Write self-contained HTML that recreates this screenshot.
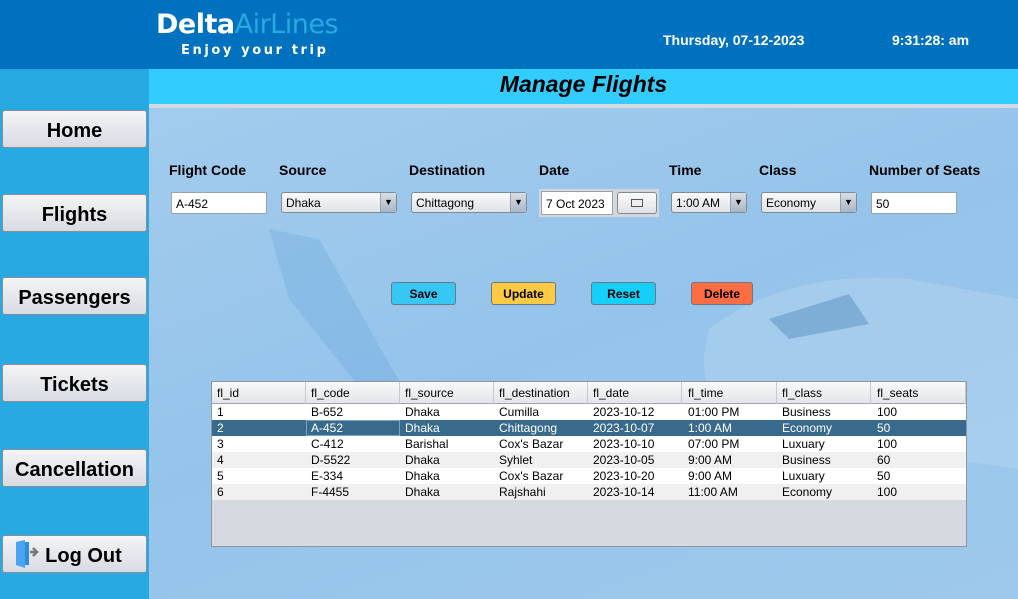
<!DOCTYPE html>
<html><head><meta charset="utf-8"><style>
*{margin:0;padding:0;box-sizing:border-box}
body{width:1018px;height:599px;overflow:hidden;position:relative;font-family:"Liberation Sans",Arial,sans-serif;background:#9cc7ea}
.abs{position:absolute}
#hdr{left:0;top:0;width:1018px;height:69px;background:#0071bf}
#side{left:0;top:69px;width:149px;height:530px;background:#29a9e1}
#main{left:149px;top:69px;width:869px;height:530px;background:linear-gradient(160deg,#a4cdee 0%,#95c3ea 50%,#9ec9ec 100%)}
#tbar{left:149px;top:69px;width:869px;height:35px;background:#33ccff;text-align:center;font:italic bold 23px "Liberation Sans",sans-serif;line-height:31px;color:#000}
#line{left:149px;top:104px;width:869px;height:4px;background:#d3dbe2}
.sb{position:absolute;left:2px;width:145px;height:38px;border:1px solid #8a8f96;border-radius:3px;background:linear-gradient(#f4f4f6,#d8dbe2);font:bold 20px "Liberation Sans",sans-serif;text-align:center;line-height:40px;color:#000}
.lbl{position:absolute;top:162px;font:bold 14px "Liberation Sans",sans-serif;color:#000}
.inp{position:absolute;top:192px;height:22px;background:#fff;border:1px solid #9aa3ad;font-size:12px;padding-left:4px;line-height:22px}
.cb{position:absolute;top:192px;height:21px;border:1px solid #7d8a97;border-radius:3px;background:linear-gradient(#fafafa,#dfe2e6);font-size:12px;padding-left:4px;line-height:20px}
.cb i{position:absolute;right:0;top:0;width:16px;height:19px;border-left:1px solid #9aa3ad;background:linear-gradient(#d8dee6,#aab6c3);font-style:normal;font-size:9px;text-align:center;line-height:19px}
.btn{position:absolute;top:282px;width:65px;height:23px;border:1px solid #6b7885;border-radius:3px;font:bold 12px "Liberation Sans",sans-serif;text-align:center;line-height:22px}
#tbl{left:211px;top:381px;width:756px;height:166px;background:#d6d9df;border:1px solid #8f969e}
.row{position:absolute;left:0;width:754px;height:16px;font-size:12px;line-height:17px}
.row span{position:absolute;top:0}
.th{top:0;height:22px;background:linear-gradient(#fafafa,#e3e5e9);border-bottom:1px solid #a0a6ae;line-height:22px}
.th span{height:22px;border-right:1px solid #c6cad0;width:94px}
</style></head><body>
<div id="hdr" class="abs">
<div class="abs" style="left:156px;top:9px;font:bold 27px 'DejaVu Sans',sans-serif;color:#fff;letter-spacing:-0.5px">Delta<span style="font-weight:normal;color:#29a9e1">AirLines</span></div>
<div class="abs" style="left:181px;top:43px;font:bold 13px 'DejaVu Sans',sans-serif;color:#fff;letter-spacing:2.6px">Enjoy your trip</div>
<div class="abs" style="left:663px;top:32px;font:bold 14px 'Liberation Sans',sans-serif;color:#fff">Thursday, 07-12-2023</div>
<div class="abs" style="left:892px;top:32px;font:bold 14px 'Liberation Sans',sans-serif;color:#fff">9:31:28: am</div>
</div>
<div id="side" class="abs"></div>
<div id="main" class="abs">
<svg width="869" height="530" style="position:absolute;left:0;top:0;opacity:.25"><path d="M120 160 L170 170 L260 330 L220 330 L140 230Z" fill="#5aa0d8"/><path d="M560 260 Q640 200 760 210 L869 230 L869 400 L600 360 Q540 330 560 260Z" fill="#cfe4f5"/><path d="M620 250 L700 225 L720 255 L640 270Z" fill="#3a6e9a"/></svg>
</div>
<div id="tbar" class="abs">Manage Flights</div>
<div id="line" class="abs"></div>
<div class="sb" style="top:110px">Home</div>
<div class="sb" style="top:194px">Flights</div>
<div class="sb" style="top:277px">Passengers</div>
<div class="sb" style="top:364px">Tickets</div>
<div class="sb" style="top:449px">Cancellation</div>
<div class="sb" style="top:535px;padding-left:18px">Log Out
<svg width="26" height="30" style="position:absolute;left:10px;top:3px"><path d="M3 3 L12 1 L12 29 L3 26Z" fill="#4aa3f0"/><path d="M12 3 L16 3 L16 26 L12 26" fill="#2f8ce0"/><path d="M17 13 L23 13 M20 9 L24 13 L20 17" stroke="#777" stroke-width="2.5" fill="none"/></svg></div>

<div class="lbl" style="left:169px">Flight Code</div>
<div class="lbl" style="left:279px">Source</div>
<div class="lbl" style="left:409px">Destination</div>
<div class="lbl" style="left:539px">Date</div>
<div class="lbl" style="left:669px">Time</div>
<div class="lbl" style="left:759px">Class</div>
<div class="lbl" style="left:869px">Number of Seats</div>

<div class="inp" style="left:171px;width:96px">A-452</div>
<div class="cb" style="left:281px;width:116px">Dhaka<i>▼</i></div>
<div class="cb" style="left:411px;width:116px">Chittagong<i>▼</i></div>
<div class="abs" style="left:539px;top:189px;width:120px;height:28px;background:#d3d7dc"></div>
<div class="inp" style="left:541px;top:191px;width:72px;height:24px;line-height:24px">7 Oct 2023</div>
<div class="cb" style="left:617px;top:192px;width:40px;height:22px;text-align:center;padding:0"><span style="display:inline-block;width:12px;height:8px;border:1px solid #555;margin-top:6px;background:#eee"></span></div>
<div class="cb" style="left:671px;width:76px">1:00 AM<i>▼</i></div>
<div class="cb" style="left:761px;width:96px">Economy<i>▼</i></div>
<div class="inp" style="left:871px;width:86px">50</div>

<div class="btn" style="left:391px;background:#36c7f5">Save</div>
<div class="btn" style="left:491px;background:#fdcb43">Update</div>
<div class="btn" style="left:591px;background:#16cff8">Reset</div>
<div class="btn" style="left:691px;width:62px;background:#fc6d43">Delete</div>

<div id="tbl" class="abs">
<div class="row th"><span style="left:0;padding-left:5px">fl_id</span><span style="left:94px;padding-left:5px">fl_code</span><span style="left:188px;padding-left:5px">fl_source</span><span style="left:282px;padding-left:5px">fl_destination</span><span style="left:376px;padding-left:5px">fl_date</span><span style="left:471px;padding-left:5px">fl_time</span><span style="left:565px;padding-left:5px">fl_class</span><span style="left:660px;padding-left:5px">fl_seats</span></div>
<div class="row" style="top:22px;background:#fff"><span style="left:5px">1</span><span style="left:99px">B-652</span><span style="left:193px">Dhaka</span><span style="left:287px">Cumilla</span><span style="left:381px">2023-10-12</span><span style="left:476px">01:00 PM</span><span style="left:570px">Business</span><span style="left:665px">100</span></div>
<div class="row" style="top:38px;background:#386a8c;color:#fff"><span style="left:5px">2</span><span style="left:94px;width:94px;height:16px;border:1px solid #7aa6c8;padding-left:4px;line-height:15px">A-452</span><span style="left:193px">Dhaka</span><span style="left:287px">Chittagong</span><span style="left:381px">2023-10-07</span><span style="left:476px">1:00 AM</span><span style="left:570px">Economy</span><span style="left:665px">50</span></div>
<div class="row" style="top:54px;background:#fff"><span style="left:5px">3</span><span style="left:99px">C-412</span><span style="left:193px">Barishal</span><span style="left:287px">Cox's Bazar</span><span style="left:381px">2023-10-10</span><span style="left:476px">07:00 PM</span><span style="left:570px">Luxuary</span><span style="left:665px">100</span></div>
<div class="row" style="top:70px;background:#f0f0f0"><span style="left:5px">4</span><span style="left:99px">D-5522</span><span style="left:193px">Dhaka</span><span style="left:287px">Syhlet</span><span style="left:381px">2023-10-05</span><span style="left:476px">9:00 AM</span><span style="left:570px">Business</span><span style="left:665px">60</span></div>
<div class="row" style="top:86px;background:#fff"><span style="left:5px">5</span><span style="left:99px">E-334</span><span style="left:193px">Dhaka</span><span style="left:287px">Cox's Bazar</span><span style="left:381px">2023-10-20</span><span style="left:476px">9:00 AM</span><span style="left:570px">Luxuary</span><span style="left:665px">50</span></div>
<div class="row" style="top:102px;background:#f0f0f0"><span style="left:5px">6</span><span style="left:99px">F-4455</span><span style="left:193px">Dhaka</span><span style="left:287px">Rajshahi</span><span style="left:381px">2023-10-14</span><span style="left:476px">11:00 AM</span><span style="left:570px">Economy</span><span style="left:665px">100</span></div>
</div>
</body></html>
